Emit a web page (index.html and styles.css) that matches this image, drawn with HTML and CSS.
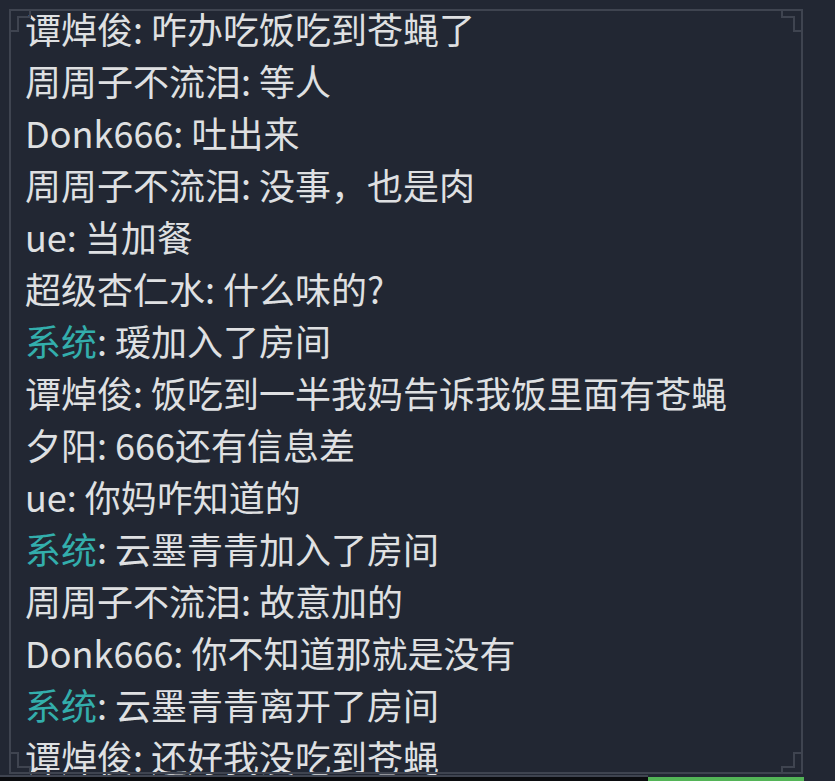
FILE: index.html
```html
<!DOCTYPE html>
<html>
  <head>
    <link rel="stylesheet" href="styles.css">
  </head>
  <body>
    <div class="screen">
      <div class="chat">
        <p class="msg"><span class="name">谭焯俊</span>: 咋办吃饭吃到苍蝇了</p>
        <p class="msg"><span class="name">周周子不流泪</span>: 等人</p>
        <p class="msg"><span class="name">Donk666</span>: 吐出来</p>
        <p class="msg"><span class="name">周周子不流泪</span>: 没事，也是肉</p>
        <p class="msg"><span class="name">ue</span>: 当加餐</p>
        <p class="msg"><span class="name">超级杏仁水</span>: 什么味的?</p>
        <p class="msg"><span class="name system">系统</span>: 瑷加入了房间</p>
        <p class="msg"><span class="name">谭焯俊</span>: 饭吃到一半我妈告诉我饭里面有苍蝇</p>
        <p class="msg"><span class="name">夕阳</span>: 666还有信息差</p>
        <p class="msg"><span class="name">ue</span>: 你妈咋知道的</p>
        <p class="msg"><span class="name system">系统</span>: 云墨青青加入了房间</p>
        <p class="msg"><span class="name">周周子不流泪</span>: 故意加的</p>
        <p class="msg"><span class="name">Donk666</span>: 你不知道那就是没有</p>
        <p class="msg"><span class="name system">系统</span>: 云墨青青离开了房间</p>
        <p class="msg"><span class="name">谭焯俊</span>: 还好我没吃到苍蝇</p>
      </div>

      <div class="progress">
        <div class="progress-track"></div>
        <div class="progress-fill"></div>
      </div>

      <!-- decorative frame drawn over the chat -->
      <svg class="frame" width="835" height="781" viewBox="0 0 835 781">
        <path d="M10 10 H802 V773 H10 Z" />
        <path d="M30 10 V17 H18 V31 H10" />
        <path d="M782 10 V17 H794 V31 H802" />
        <path d="M10 753 H18 V767 H30 V773" />
        <path d="M802 753 H794 V767 H782 V773" />
      </svg>
    </div>
  </body>
</html>
```

FILE: styles.css
```css
/* chat overlay */
body {
  margin: 0;
  background-color: #222733;
  font-family: "Noto Sans CJK SC", "Noto Sans", sans-serif;
}

.screen {
  position: relative;
  height: 781px;
  display: grid;
  grid-template-rows: minmax(0, 1fr) 6px;
  overflow: hidden;
}

.chat {
  padding: 2px 0 0 25px;
}

.msg {
  margin: 0;
  font-size: 36px;
  line-height: 52px;
  color: #dfe0e2;
  white-space: nowrap;
}

.name.system {
  color: #33aeac;
}

.progress {
  position: relative;
  display: flex;
}

.progress-track {
  width: 648px;
  background-color: #0b0c0f;
  border-top: 2px solid #3f4450;
}

.progress-fill {
  width: 156px;
  margin-top: 2px;
  background-color: #53b457;
}

.frame {
  position: absolute;
  left: 0;
  top: 0;
  pointer-events: none;
}

.frame path {
  fill: none;
  stroke: #3f4450;
  stroke-width: 2;
}
```
